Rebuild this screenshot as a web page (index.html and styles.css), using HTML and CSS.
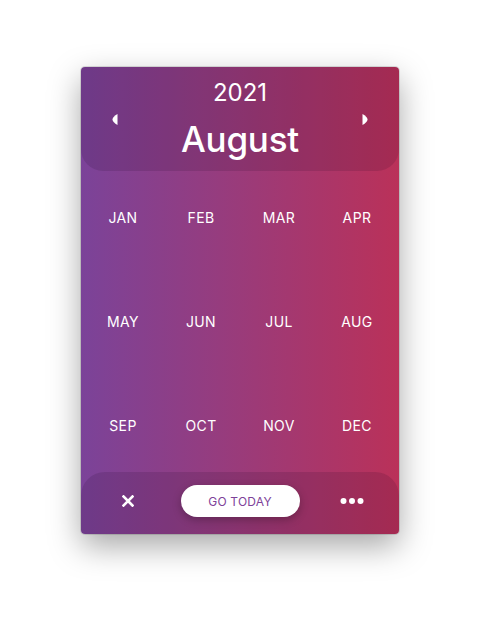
FILE: index.html
```html
<!DOCTYPE html>
<html>
<head>
<meta charset="utf-8">
<link rel="stylesheet" href="styles.css">
</head>
<body>
<div class="card">
  <header class="head">
    <button class="nav nav-prev" aria-label="Previous year">
      <svg width="6" height="11" viewBox="0 0 6 11"><path d="M5.5 0 L5.5 11 C2.5 9.5 0.5 7.3 0.5 5.5 C0.5 3.7 2.5 1.5 5.5 0 Z" fill="#fff"/></svg>
    </button>
    <div class="title">
      <div class="year">2021</div>
      <div class="month">August</div>
    </div>
    <button class="nav nav-next" aria-label="Next year">
      <svg width="6" height="11" viewBox="0 0 6 11"><path d="M0.5 0 L0.5 11 C3.5 9.5 5.5 7.3 5.5 5.5 C5.5 3.7 3.5 1.5 0.5 0 Z" fill="#fff"/></svg>
    </button>
  </header>
  <div class="grid">
    <div class="m">JAN</div><div class="m">FEB</div><div class="m">MAR</div><div class="m">APR</div>
    <div class="m">MAY</div><div class="m">JUN</div><div class="m">JUL</div><div class="m">AUG</div>
    <div class="m">SEP</div><div class="m">OCT</div><div class="m">NOV</div><div class="m">DEC</div>
  </div>
  <footer class="foot">
    <button class="icon" aria-label="Close">
      <svg width="12" height="12" viewBox="0 0 12 12"><path d="M1.5 1.5 L10.5 10.5 M10.5 1.5 L1.5 10.5" stroke="#fff" stroke-width="2.6" stroke-linecap="square"/></svg>
    </button>
    <button class="today">GO TODAY</button>
    <button class="icon" aria-label="More">
      <svg width="26" height="8" viewBox="0 0 26 8"><circle cx="4.5" cy="4" r="3" fill="#fff"/><circle cx="13" cy="4" r="3" fill="#fff"/><circle cx="21.5" cy="4" r="3" fill="#fff"/></svg>
    </button>
  </footer>
</div>
</body>
</html>
```
FILE: styles.css
```css
* { box-sizing: border-box; }
html, body { margin: 0; padding: 0; background: #fff; }
body {
  width: 480px;
  height: 630px;
  padding-top: 67px;
  font-family: Inter, "Noto Sans", sans-serif;
  color: #fff;
}
.card {
  width: 318px;
  height: 467px;
  margin: 0 auto;
  border-radius: 4px;
  background: linear-gradient(to right, #7b4399 0%, #9a3b7a 50%, #ba3159 100%);
  box-shadow: 0 0 0 1px rgba(0,0,0,0.12), 0 12px 32px rgba(0,0,0,0.35);
  display: flex;
  flex-direction: column;
  overflow: hidden;
}
.head {
  height: 104px;
  background: rgba(20, 0, 30, 0.13);
  border-radius: 0 0 22px 22px;
  display: flex;
  align-items: center;
  justify-content: space-between;
  padding: 0 24px;
}
.nav {
  width: 20px;
  height: 20px;
  border: 0;
  padding: 0;
  background: none;
  display: flex;
  align-items: center;
  justify-content: center;
}
.title {
  display: flex;
  flex-direction: column;
  align-items: center;
  align-self: flex-start;
  padding-top: 12px;
}
.year {
  font-size: 24px;
  line-height: 28px;
  font-weight: 400;
}
.month {
  font-size: 35px;
  line-height: 44px;
  font-weight: 500;
  margin-top: 10px;
  letter-spacing: -0.2px;
}
.grid {
  flex: 1;
  display: grid;
  grid-template-columns: repeat(4, 78px);
  grid-auto-rows: 20px;
  row-gap: 84px;
  padding: 37px 3px 0;
}
.m {
  text-align: center;
  font-size: 14px;
  line-height: 20px;
  font-weight: 400;
  letter-spacing: 0.4px;
}
.foot {
  height: 62px;
  background: rgba(20, 0, 30, 0.13);
  border-radius: 24px 24px 0 0;
  display: flex;
  align-items: flex-start;
  justify-content: space-between;
  padding: 13px 34px 0 34px;
}
.icon {
  width: 26px;
  height: 32px;
  border: 0;
  padding: 0;
  background: none;
  display: flex;
  align-items: center;
  justify-content: center;
}
.foot .icon:first-child { justify-content: flex-start; padding-left: 7px; }
.today {
  width: 119px;
  height: 32px;
  border: 0;
  border-radius: 16px;
  background: #fff;
  color: #7d4199;
  font-family: Inter, "Noto Sans", sans-serif;
  font-size: 12px;
  font-weight: 400;
  letter-spacing: 0.2px;
  box-shadow: 0 3px 8px rgba(0,0,0,0.25);
}
```
